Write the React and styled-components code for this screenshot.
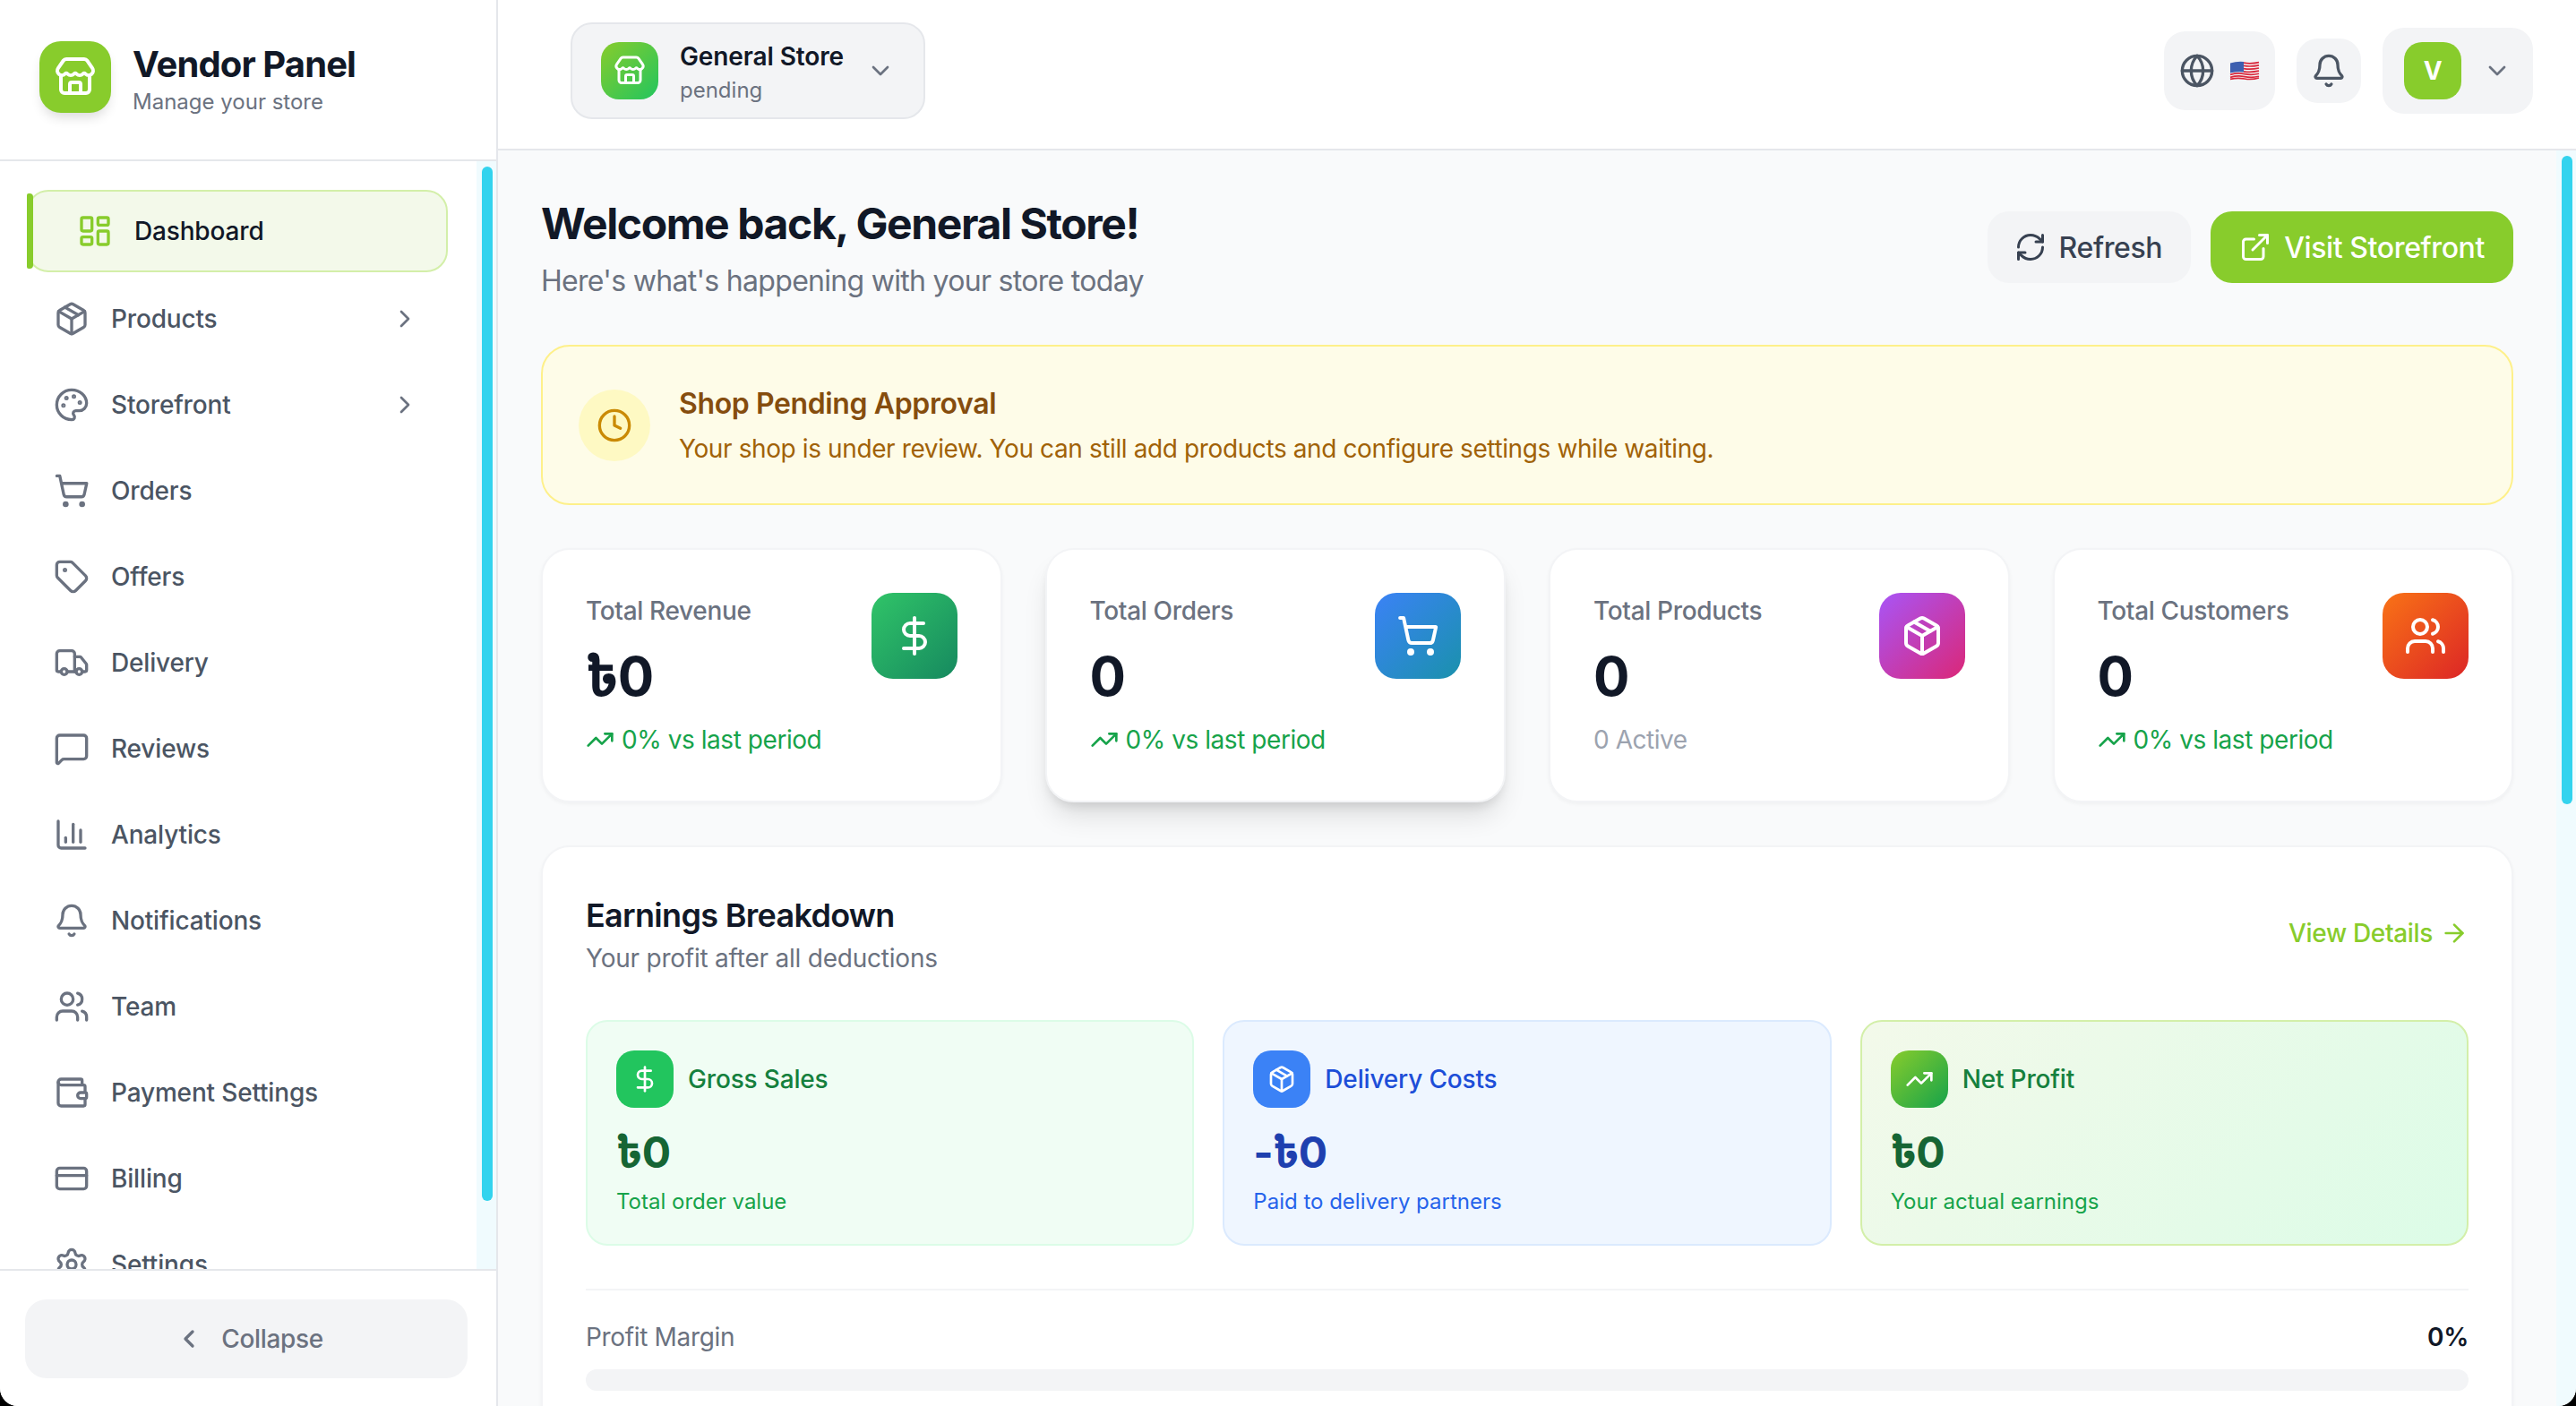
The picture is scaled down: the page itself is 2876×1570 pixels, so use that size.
import React from 'react';
import styled, { createGlobalStyle } from 'styled-components';
import {
  ArrowRight, Bell, ChartColumn, ChevronDown, ChevronLeft, ChevronRight, Clock, CreditCard,
  DollarSign, ExternalLink, Globe, LayoutDashboard, MessageSquare, Package, Palette, RefreshCw,
  Settings, ShoppingCart, Store, Tag, TrendingUp, Truck, Users, Wallet,
} from 'lucide-react';

const Colors = {
  primary: '#88cc2c',
  ink: '#111827',
  body: '#4b5563',
  muted: '#6b7280',
  line: '#e5e7eb',
  soft: '#f3f4f6',
  thumb: '#33d3ee',
  track: '#f0fbfe',
};

const GlobalStyle = createGlobalStyle`
  html, body {
    margin: 0;
    padding: 0;
    background: #000;
  }
  * {
    box-sizing: border-box;
    letter-spacing: -0.012em;
  }
  body {
    font-family: Inter, "Noto Sans", "Noto Sans Bengali", "DejaVu Sans", sans-serif;
    color: ${Colors.ink};
  }
`;

const Shell = styled.div`
  display: flex;
  width: 2876px;
  height: 1570px;
  overflow: hidden;
  background: #f9fafb;
  border-radius: 0 0 20px 20px;
`;

const Sidebar = styled.aside`
  display: flex;
  flex-direction: column;
  flex: none;
  width: 556px;
  height: 100%;
  background: #fff;
  border-right: 2px solid ${Colors.line};
`;

const Brand = styled.div`
  display: flex;
  align-items: center;
  gap: 24px;
  flex: none;
  height: 180px;
  padding: 0 44px 2px;
  border-bottom: 2px solid ${Colors.line};
`;

const BrandLogo = styled.div`
  display: flex;
  align-items: center;
  justify-content: center;
  width: 80px;
  height: 80px;
  margin-bottom: 4px;
  border-radius: 24px;
  color: #fff;
  background: ${Colors.primary};
  box-shadow: 0 8px 14px -4px rgba(0, 0, 0, 0.16);
`;

const BrandTitle = styled.div`
  font-size: 40px;
  font-weight: 700;
  line-height: 52px;
  letter-spacing: -0.9px;
`;

const BrandSub = styled.div`
  margin-top: 0;
  font-size: 24px;
  line-height: 32px;
  letter-spacing: 0;
  color: ${Colors.muted};
`;

const NavArea = styled.div`
  position: relative;
  flex: 1;
  min-height: 0;
  overflow: hidden;
`;

const NavList = styled.nav`
  display: flex;
  flex-direction: column;
  gap: 8px;
  padding: 32px 54px 0 30px;
`;

const NavItem = styled.a`
  position: relative;
  display: flex;
  align-items: center;
  gap: 24px;
  flex: none;
  height: ${(p) => (p.$active ? '92px' : '88px')};
  padding-left: ${(p) => (p.$active ? '54px' : '30px')};
  padding-right: 32px;
  font-size: 28px;
  font-weight: 500;
  color: ${(p) => (p.$active ? Colors.ink : Colors.body)};
  background: ${(p) => (p.$active ? '#f3f9ea' : 'transparent')};
  border: ${(p) => (p.$active ? '2px solid #d3efa9' : 'none')};
  border-radius: 24px;

  svg {
    flex: none;
    color: ${(p) => (p.$active ? Colors.primary : Colors.muted)};
  }

  ${(p) => p.$active && `
    &::before {
      content: '';
      position: absolute;
      left: -2px;
      top: 2px;
      bottom: 2px;
      width: 7px;
      border-radius: 2px 4px 4px 2px;
      background: ${Colors.primary};
    }
  `}
`;

const NavLabel = styled.span`
  flex: 1;
  letter-spacing: -0.006em;
`;

const Track = styled.div`
  position: absolute;
  top: 0;
  right: 0;
  bottom: 0;
  width: 22px;
  background: ${Colors.track};
`;

const Thumb = styled.div`
  position: absolute;
  left: 6px;
  width: 12px;
  border-radius: 6px;
  background: ${Colors.thumb};
  top: ${(p) => p.$top}px;
  height: ${(p) => p.$height}px;
`;

const SidebarFooter = styled.div`
  flex: none;
  height: 153px;
  padding: 32px 32px 0 28px;
  border-top: 2px solid ${Colors.line};
`;

const CollapseButton = styled.button`
  display: flex;
  align-items: center;
  justify-content: center;
  gap: 20px;
  width: 100%;
  height: 88px;
  padding: 0 0 0 6px;
  border: none;
  border-radius: 24px;
  font: 500 28px Inter, sans-serif;
  color: ${Colors.muted};
  background: ${Colors.soft};
`;

const Main = styled.div`
  display: flex;
  flex-direction: column;
  flex: 1;
  min-width: 0;
`;

const TopBar = styled.header`
  display: flex;
  align-items: center;
  justify-content: space-between;
  flex: none;
  height: 168px;
  padding: 0 48px 8px 81px;
  background: #fff;
  border-bottom: 2px solid ${Colors.line};
`;

const StoreSwitcher = styled.div`
  display: flex;
  align-items: center;
  width: 396px;
  height: 108px;
  padding: 0 32px;
  background: ${Colors.soft};
  border: 2px solid ${Colors.line};
  border-radius: 24px;
`;

const StoreIcon = styled.div`
  display: flex;
  align-items: center;
  justify-content: center;
  flex: none;
  width: 64px;
  height: 64px;
  margin-right: 24px;
  border-radius: 20px;
  color: #fff;
  background: linear-gradient(135deg, #88cc2c, #22c55e);
`;

const StoreText = styled.div`
  flex: 1;
  padding-top: 3px;
`;

const StoreName = styled.div`
  font-size: 28px;
  font-weight: 600;
  line-height: 40px;
  letter-spacing: -0.004em;
`;

const StoreStatus = styled.div`
  font-size: 24px;
  line-height: 36px;
  letter-spacing: 0;
  color: ${Colors.muted};
`;

const TopActions = styled.div`
  display: flex;
  align-items: center;
  gap: 24px;
`;

const GreyPill = styled.div`
  display: flex;
  align-items: center;
  justify-content: center;
  gap: ${(p) => p.$gap || 0}px;
  width: ${(p) => p.$w}px;
  height: ${(p) => p.$h}px;
  border-radius: 24px;
  color: ${Colors.body};
  background: ${Colors.soft};
`;

const Avatar = styled.div`
  display: flex;
  align-items: center;
  justify-content: center;
  width: 64px;
  height: 64px;
  border-radius: 20px;
  font-size: 28px;
  font-weight: 700;
  color: #fff;
  background: ${Colors.primary};
`;

const Content = styled.div`
  position: relative;
  flex: 1;
  min-height: 0;
  overflow: hidden;
  padding: 51px 70px 0 48px;
`;

const PageHead = styled.div`
  display: flex;
  align-items: flex-start;
  justify-content: space-between;
  height: 166px;
`;

const PageTitle = styled.h1`
  margin: 0;
  font-size: 48px;
  font-weight: 700;
  line-height: 62px;
  letter-spacing: -1.4px;
`;

const PageSub = styled.p`
  margin: 13px 0 0;
  font-size: 32px;
  line-height: 40px;
  letter-spacing: -0.7px;
  color: ${Colors.muted};
`;

const HeadActions = styled.div`
  display: flex;
  gap: 22px;
  margin-top: 17px;
`;

const Button = styled.button`
  display: flex;
  align-items: center;
  gap: 14px;
  height: 80px;
  padding: 0 32px 0 ${(p) => (p.$primary ? 32 : 30)}px;
  border: none;
  border-radius: 24px;
  font: 500 32px Inter, sans-serif;
  color: ${(p) => (p.$primary ? '#fff' : '#374151')};
  background: ${(p) => (p.$primary ? Colors.primary : Colors.soft)};
`;

const Notice = styled.div`
  display: flex;
  align-items: center;
  gap: 32px;
  height: 179px;
  padding: 0 40px;
  background: #fefce8;
  border: 2px solid #fef08a;
  border-radius: 32px;
`;

const NoticeIcon = styled.div`
  display: flex;
  align-items: center;
  justify-content: center;
  flex: none;
  width: 80px;
  height: 80px;
  border-radius: 50%;
  color: #ca8a04;
  background: #fef9c3;
`;

const NoticeTitle = styled.div`
  font-size: 32px;
  font-weight: 600;
  line-height: 44px;
  color: #854d0e;
`;

const NoticeText = styled.div`
  margin-top: 8px;
  font-size: 28px;
  line-height: 40px;
  letter-spacing: -0.014em;
  color: #a16207;
`;

const StatGrid = styled.div`
  display: grid;
  grid-template-columns: repeat(4, 1fr);
  gap: 48px;
  margin-top: 48px;
`;

const StatCard = styled.div`
  display: flex;
  justify-content: space-between;
  height: 284px;
  padding: 48px;
  background: #fff;
  border: 2px solid ${Colors.soft};
  border-radius: 32px;
  box-shadow: ${(p) => (p.$lifted
    ? '0 20px 30px -6px rgba(0, 0, 0, 0.12), 0 8px 12px -4px rgba(0, 0, 0, 0.1)'
    : '0 2px 4px rgba(0, 0, 0, 0.04)')};
`;

const StatLabel = styled.div`
  font-size: 28px;
  font-weight: 500;
  line-height: 40px;
  color: ${Colors.muted};
`;

const StatValue = styled.div`
  margin-top: 17px;
  font-size: 60px;
  font-weight: 700;
  line-height: 72px;
`;

const StatNote = styled.div`
  display: flex;
  align-items: center;
  gap: 8px;
  margin-top: 15px;
  font-size: 28px;
  line-height: 40px;
  letter-spacing: -0.016em;
  color: ${(p) => (p.$muted ? '#9ca3af' : '#16a34a')};
`;

const StatIcon = styled.div`
  display: flex;
  align-items: center;
  justify-content: center;
  flex: none;
  width: 96px;
  height: 96px;
  border-radius: 24px;
  color: #fff;
  background: linear-gradient(135deg, ${(p) => p.$from}, ${(p) => p.$to});
`;

const Panel = styled.section`
  margin-top: 48px;
  padding: 49px 48px 48px;
  background: #fff;
  border: 2px solid ${Colors.soft};
  border-radius: 32px;
  box-shadow: 0 2px 4px rgba(0, 0, 0, 0.04);
`;

const PanelHead = styled.div`
  display: flex;
  align-items: center;
  justify-content: space-between;
  height: 96px;
`;

const PanelTitle = styled.h2`
  margin: 0;
  font-size: 36px;
  font-weight: 600;
  line-height: 52px;
  letter-spacing: -0.7px;
`;

const PanelSub = styled.p`
  margin: 2px 0 0;
  font-size: 28px;
  line-height: 40px;
  letter-spacing: -0.008em;
  color: ${Colors.muted};
`;

const DetailsLink = styled.a`
  display: flex;
  align-items: center;
  gap: 8px;
  margin-bottom: 2px;
  font-size: 28px;
  font-weight: 500;
  color: ${Colors.primary};
`;

const MiniGrid = styled.div`
  display: grid;
  grid-template-columns: repeat(3, 1fr);
  gap: 32px;
  margin-top: 48px;
`;

const MiniCard = styled.div`
  height: 252px;
  padding: 32px;
  background: ${(p) => p.$bg};
  border: 2px solid ${(p) => p.$border};
  border-radius: 24px;
`;

const MiniHead = styled.div`
  display: flex;
  align-items: center;
  gap: 16px;
`;

const MiniIcon = styled.div`
  display: flex;
  align-items: center;
  justify-content: center;
  width: 64px;
  height: 64px;
  border-radius: 20px;
  color: #fff;
  background: ${(p) => p.$bg};
`;

const MiniLabel = styled.div`
  font-size: 28px;
  font-weight: 500;
  letter-spacing: -0.006em;
  color: ${(p) => p.$color};
`;

const MiniValue = styled.div`
  margin-top: 18px;
  font-size: 48px;
  font-weight: 700;
  line-height: 64px;
  color: ${(p) => p.$color};
`;

const MiniNote = styled.div`
  margin-top: 5px;
  font-size: 24px;
  line-height: 36px;
  letter-spacing: 0;
  color: ${(p) => p.$color};
`;

const Margin = styled.div`
  margin-top: 48px;
  padding-top: 32px;
  border-top: 2px solid ${Colors.soft};
`;

const MarginRow = styled.div`
  display: flex;
  justify-content: space-between;
  align-items: center;
  font-size: 28px;
  line-height: 40px;
  color: ${Colors.muted};

  strong {
    font-weight: 600;
    color: ${Colors.ink};
  }
`;

const MarginBar = styled.div`
  height: 24px;
  margin-top: 16px;
  border-radius: 12px;
  background: ${Colors.soft};
`;

// the flag emoji, as a small waving drawing
const Flag = () => (
  <svg width="34" height="24" viewBox="0 0 34 24">
    <path d="M1 3.5 Q9 0.5 17 2 T33 1.5 V20 Q25 23 17 21.5 T1 22Z" fill="#f6f6f6" />
    <g fill="none" stroke="#d8283c" strokeWidth="1.7">
      <path d="M16 3.2 Q24 4.6 33 2.6" />
      <path d="M16 6.4 Q24 7.8 33 5.8" />
      <path d="M16 9.6 Q24 11 33 9" />
      <path d="M16 12.8 Q24 14.2 33 12.2" />
      <path d="M1 16.4 Q9 14 17 15.6 T33 15.2" />
      <path d="M1 19.4 Q9 17 17 18.6 T33 18.2" />
      <path d="M1 21.4 Q9 19.6 17 21 T33 20" />
    </g>
    <path d="M1 3.5 Q8 1.2 16 1.9 V13.5 Q8 12.8 1 14.5Z" fill="#3d5fb0" />
  </svg>
);

const navItems = [
  { label: 'Dashboard', icon: LayoutDashboard, active: true },
  { label: 'Products', icon: Package, more: true },
  { label: 'Storefront', icon: Palette, more: true },
  { label: 'Orders', icon: ShoppingCart },
  { label: 'Offers', icon: Tag },
  { label: 'Delivery', icon: Truck },
  { label: 'Reviews', icon: MessageSquare },
  { label: 'Analytics', icon: ChartColumn },
  { label: 'Notifications', icon: Bell },
  { label: 'Team', icon: Users },
  { label: 'Payment Settings', icon: Wallet },
  { label: 'Billing', icon: CreditCard },
  { label: 'Settings', icon: Settings },
];

const stats = [
  { label: 'Total Revenue', value: '৳0', icon: DollarSign, from: '#30c468', to: '#16895f' },
  { label: 'Total Orders', value: '0', icon: ShoppingCart, from: '#3b82f6', to: '#1a91ac', lifted: true },
  { label: 'Total Products', value: '0', icon: Package, from: '#a855f7', to: '#db2777', note: '0 Active' },
  { label: 'Total Customers', value: '0', icon: Users, from: '#f97316', to: '#dc2626' },
];

const earnings = [
  {
    label: 'Gross Sales', value: '৳0', note: 'Total order value', icon: DollarSign,
    bg: '#f0fdf4', border: '#dcfce7', iconBg: '#22c55e', labelColor: '#15803d', valueColor: '#166534', noteColor: '#16a34a',
  },
  {
    label: 'Delivery Costs', value: '-৳0', note: 'Paid to delivery partners', icon: Package,
    bg: '#eff6ff', border: '#dbeafe', iconBg: '#3b82f6', labelColor: '#1d4ed8', valueColor: '#1e40af', noteColor: '#2563eb',
  },
  {
    label: 'Net Profit', value: '৳0', note: 'Your actual earnings', icon: TrendingUp,
    bg: 'linear-gradient(135deg, #f3f9ea, #dcfce7)', border: '#d3efa9', iconBg: 'linear-gradient(135deg, #88cc2c, #16a34a)',
    labelColor: '#15803d', valueColor: '#166534', noteColor: '#16a34a',
  },
];

const App = () => {
  return (
    <>
      <GlobalStyle />
      <Shell>
        <Sidebar>
          <Brand>
            <BrandLogo><Store size={48} strokeWidth={2} /></BrandLogo>
            <div>
              <BrandTitle>Vendor Panel</BrandTitle>
              <BrandSub>Manage your store</BrandSub>
            </div>
          </Brand>
          <NavArea>
            <NavList>
              {navItems.map(({ label, icon: Icon, active, more }) => (
                <NavItem key={label} $active={active}>
                  <Icon size={40} strokeWidth={2} />
                  <NavLabel>{label}</NavLabel>
                  {more && <ChevronRight size={32} strokeWidth={2} />}
                </NavItem>
              ))}
            </NavList>
            <Track><Thumb $top={6} $height={1155} /></Track>
          </NavArea>
          <SidebarFooter>
            <CollapseButton><ChevronLeft size={32} strokeWidth={2.5} />Collapse</CollapseButton>
          </SidebarFooter>
        </Sidebar>
        <Main>
          <TopBar>
            <StoreSwitcher>
              <StoreIcon><Store size={36} strokeWidth={2} /></StoreIcon>
              <StoreText>
                <StoreName>General Store</StoreName>
                <StoreStatus>pending</StoreStatus>
              </StoreText>
              <ChevronDown size={32} color={Colors.muted} />
            </StoreSwitcher>
            <TopActions>
              <GreyPill $w={124} $h={88} $gap={16}><Globe size={40} /><Flag /></GreyPill>
              <GreyPill $w={72} $h={72}><Bell size={40} /></GreyPill>
              <GreyPill $w={168} $h={96} $gap={24}>
                <Avatar>V</Avatar>
                <ChevronDown size={32} color={Colors.muted} />
              </GreyPill>
            </TopActions>
          </TopBar>
          <Content>
            <PageHead>
              <div>
                <PageTitle>Welcome back, General Store!</PageTitle>
                <PageSub>Here's what's happening with your store today</PageSub>
              </div>
              <HeadActions>
                <Button><RefreshCw size={36} />Refresh</Button>
                <Button $primary><ExternalLink size={36} />Visit Storefront</Button>
              </HeadActions>
            </PageHead>
            <Notice>
              <NoticeIcon><Clock size={40} /></NoticeIcon>
              <div>
                <NoticeTitle>Shop Pending Approval</NoticeTitle>
                <NoticeText>Your shop is under review. You can still add products and configure settings while waiting.</NoticeText>
              </div>
            </Notice>
            <StatGrid>
              {stats.map(({ label, value, icon: Icon, from, to, note, lifted }) => (
                <StatCard key={label} $lifted={lifted}>
                  <div>
                    <StatLabel>{label}</StatLabel>
                    <StatValue>{value}</StatValue>
                    {note
                      ? <StatNote $muted>{note}</StatNote>
                      : <StatNote><TrendingUp size={32} />0% vs last period</StatNote>}
                  </div>
                  <StatIcon $from={from} $to={to}><Icon size={48} /></StatIcon>
                </StatCard>
              ))}
            </StatGrid>
            <Panel>
              <PanelHead>
                <div>
                  <PanelTitle>Earnings Breakdown</PanelTitle>
                  <PanelSub>Your profit after all deductions</PanelSub>
                </div>
                <DetailsLink>View Details<ArrowRight size={32} /></DetailsLink>
              </PanelHead>
              <MiniGrid>
                {earnings.map(({ label, value, note, icon: Icon, bg, border, iconBg, labelColor, valueColor, noteColor }) => (
                  <MiniCard key={label} $bg={bg} $border={border}>
                    <MiniHead>
                      <MiniIcon $bg={iconBg}><Icon size={32} /></MiniIcon>
                      <MiniLabel $color={labelColor}>{label}</MiniLabel>
                    </MiniHead>
                    <MiniValue $color={valueColor}>{value}</MiniValue>
                    <MiniNote $color={noteColor}>{note}</MiniNote>
                  </MiniCard>
                ))}
              </MiniGrid>
              <Margin>
                <MarginRow><span>Profit Margin</span><strong>0%</strong></MarginRow>
                <MarginBar />
              </Margin>
            </Panel>
            <Track><Thumb $top={6} $height={724} /></Track>
          </Content>
        </Main>
      </Shell>
    </>
  );
};

export default App;
